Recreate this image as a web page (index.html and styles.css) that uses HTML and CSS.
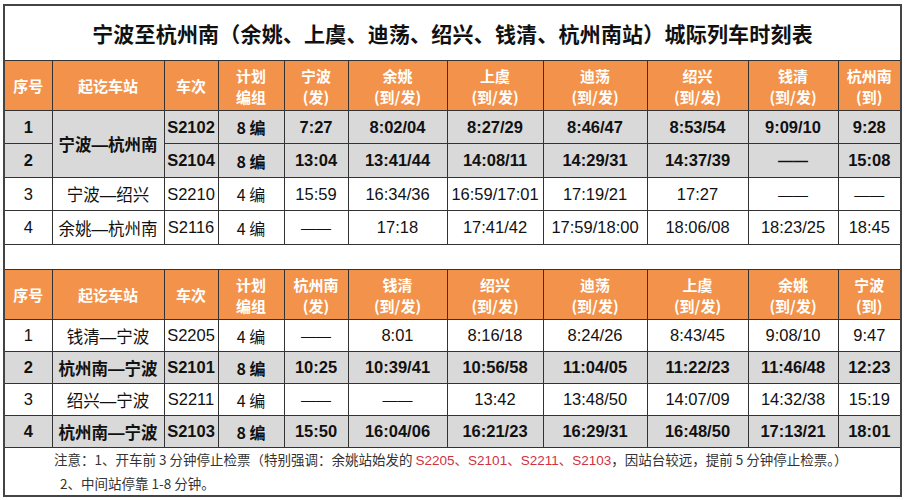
FILE: index.html
```html
<!DOCTYPE html>
<html lang="zh">
<head>
<meta charset="utf-8">
<title>宁波至杭州南城际列车时刻表</title>
<link rel="stylesheet" href="styles.css">
</head>
<body>
<div class="page">
<table class="tt">
<colgroup>
<col style="width:48px"><col style="width:112px"><col style="width:54px"><col style="width:66px"><col style="width:64px"><col style="width:99px"><col style="width:96px"><col style="width:104px"><col style="width:101px"><col style="width:90px"><col style="width:63px">
</colgroup>
<tr class="title-row"><td colspan="11">宁波至杭州南（余姚、上虞、迪荡、绍兴、钱清、杭州南站）城际列车时刻表</td></tr>
<tr class="head">
<th>序号</th><th>起讫车站</th><th>车次</th><th>计划<br>编组</th><th>宁波<br>(发)</th><th>余姚<br>(到/发)</th><th>上虞<br>(到/发)</th><th>迪荡<br>(到/发)</th><th>绍兴<br>(到/发)</th><th>钱清<br>(到/发)</th><th>杭州南<br>(到)</th>
</tr>
<tr class="row hl r33"><td>1</td><td rowspan="2" class="st">宁波—杭州南</td><td>S2102</td><td class="cn">8 编</td><td>7:27</td><td>8:02/04</td><td>8:27/29</td><td>8:46/47</td><td>8:53/54</td><td>9:09/10</td><td>9:28</td></tr>
<tr class="row hl r34"><td>2</td><td>S2104</td><td class="cn">8 编</td><td>13:04</td><td>13:41/44</td><td>14:08/11</td><td>14:29/31</td><td>14:37/39</td><td class="dash">——</td><td>15:08</td></tr>
<tr class="row r33"><td>3</td><td class="st">宁波—绍兴</td><td>S2210</td><td class="cn">4 编</td><td>15:59</td><td>16:34/36</td><td>16:59/17:01</td><td>17:19/21</td><td>17:27</td><td class="dash">——</td><td class="dash">——</td></tr>
<tr class="row r34"><td>4</td><td class="st">余姚—杭州南</td><td>S2116</td><td class="cn">4 编</td><td class="dash">——</td><td>17:18</td><td>17:41/42</td><td>17:59/18:00</td><td>18:06/08</td><td>18:23/25</td><td>18:45</td></tr>
<tr class="gap"><td colspan="11"></td></tr>
<tr class="head">
<th>序号</th><th>起讫车站</th><th>车次</th><th>计划<br>编组</th><th>杭州南<br>(发)</th><th>钱清<br>(到/发)</th><th>绍兴<br>(到/发)</th><th>迪荡<br>(到/发)</th><th>上虞<br>(到/发)</th><th>余姚<br>(到/发)</th><th>宁波<br>(到)</th>
</tr>
<tr class="row r32"><td>1</td><td class="st">钱清—宁波</td><td>S2205</td><td class="cn">4 编</td><td class="dash">——</td><td>8:01</td><td>8:16/18</td><td>8:24/26</td><td>8:43/45</td><td>9:08/10</td><td>9:47</td></tr>
<tr class="row hl r32"><td>2</td><td class="st">杭州南—宁波</td><td>S2101</td><td class="cn">8 编</td><td>10:25</td><td>10:39/41</td><td>10:56/58</td><td>11:04/05</td><td>11:22/23</td><td>11:46/48</td><td>12:23</td></tr>
<tr class="row r32"><td>3</td><td class="st">绍兴—宁波</td><td>S2211</td><td class="cn">4 编</td><td class="dash">——</td><td class="dash">——</td><td>13:42</td><td>13:48/50</td><td>14:07/09</td><td>14:32/38</td><td>15:19</td></tr>
<tr class="row hl r32"><td>4</td><td class="st">杭州南—宁波</td><td>S2103</td><td class="cn">8 编</td><td>15:50</td><td>16:04/06</td><td>16:21/23</td><td>16:29/31</td><td>16:48/50</td><td>17:13/21</td><td>18:01</td></tr>
<tr class="notes"><td colspan="11">
<p class="n1">注意：1、开车前 3 分钟停止检票（特别强调：余姚站始发的 <span class="red">S2205、S2101、S2211、S2103</span>，因站台较远，提前 5 分钟停止检票。）</p>
<p class="n2">2、中间站停靠 1-8 分钟。</p>
</td></tr>
</table>
</div>
</body>
</html>
```
FILE: styles.css
```css
html, body {
  margin: 0;
  padding: 0;
  background: #ffffff;
}
.page {
  padding: 4px 0 0 3px;
  width: 897px;
}
.tt {
  border-collapse: collapse;
  table-layout: fixed;
  width: 897px;
  font-family: "Liberation Sans", "Noto Sans CJK SC", sans-serif;
  color: #111;
  border: 2px solid #444;
}
.tt td, .tt th {
  border: 1px solid #333;
  padding: 0;
  text-align: center;
  vertical-align: middle;
  white-space: nowrap;
  overflow: hidden;
}
.title-row td {
  height: 54px;
  font-family: "Noto Sans CJK SC", sans-serif;
  font-weight: 700;
  font-size: 21px;
  letter-spacing: 0.2px;
  color: #111;
}
.head th {
  height: 49px;
  background: #f3934b;
  color: #fff;
  font-family: "Noto Sans CJK SC", sans-serif;
  font-weight: 700;
  font-size: 15px;
  line-height: 21px;
}
.row td {
  font-size: 16.5px;
}
.row td.cn {
  font-family: "Noto Sans CJK SC", sans-serif;
  font-size: 16px;
}
.row td.st {
  font-family: "Liberation Sans", "Noto Sans CJK SC", sans-serif;
  font-size: 16.5px;
}
.row td.dash {
  font-family: "Liberation Sans", sans-serif;
  font-size: 15px;
  font-weight: 400;
}
.hl td.dash {
  font-weight: 700;
}
.r33 td { height: 32px; }
.r34 td { height: 33px; }
.r32 td { height: 31px; }
.hl td {
  background: #d9d9d9;
  font-weight: 700;
}
.gap td {
  height: 24px;
  border-left: 2px solid #444;
  border-right: 2px solid #444;
}
.notes td {
  height: 46px;
  text-align: left;
  font-family: "Noto Sans CJK SC", sans-serif;
  font-size: 13.5px;
  color: #333;
}
.notes p {
  margin: 0;
  line-height: 23px;
}
.n1 { padding-left: 49px; }
.n2 { padding-left: 55px; }
.red { color: #d0323d; font-family: "Liberation Sans", "Noto Sans CJK SC", sans-serif; }
```
